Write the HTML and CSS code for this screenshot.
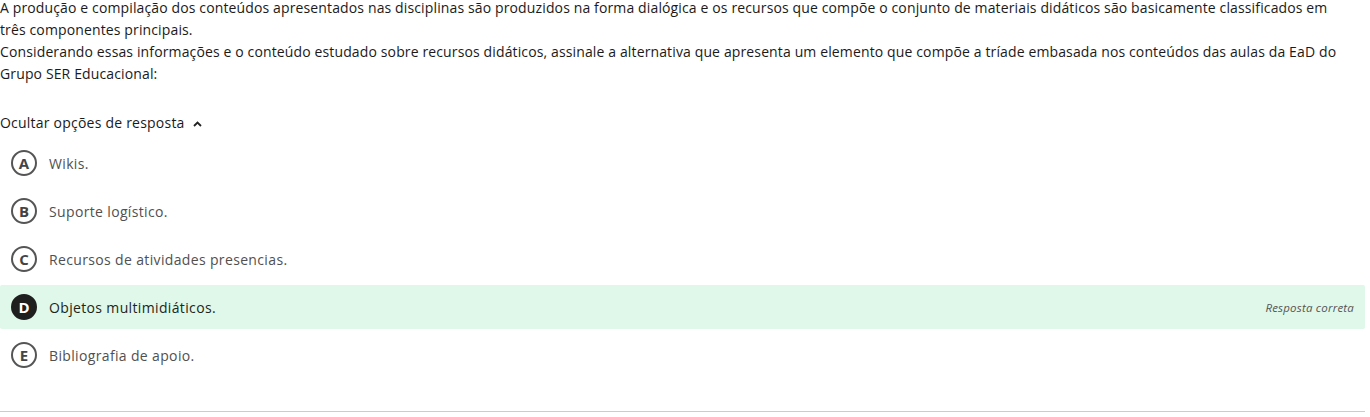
FILE: index.html
```html
<!DOCTYPE html>
<html lang="pt-BR">
<head>
<meta charset="utf-8">
<title>Questão</title>
<link rel="stylesheet" href="styles.css">
</head>
<body>
<div class="question">
  <div class="statement">
    <p>A produção e compilação dos conteúdos apresentados nas disciplinas são produzidos na forma dialógica e os recursos que compõe o conjunto de materiais didáticos são basicamente classificados em três componentes principais.</p>
    <p>Considerando essas informações e o conteúdo estudado sobre recursos didáticos, assinale a alternativa que apresenta um elemento que compõe a tríade embasada nos conteúdos das aulas da EaD do Grupo SER Educacional:</p>
  </div>
  <div class="toggle">Ocultar opções de resposta
    <svg class="chev" width="9" height="6" viewBox="0 0 9 6"><path d="M1 5 L4.5 1.5 L8 5" fill="none" stroke="#222" stroke-width="1.8"/></svg>
  </div>
  <ul class="options">
    <li class="option"><span class="letter">A</span><span class="text">Wikis.</span></li>
    <li class="option"><span class="letter">B</span><span class="text">Suporte logístico.</span></li>
    <li class="option"><span class="letter">C</span><span class="text">Recursos de atividades presencias.</span></li>
    <li class="option correct"><span class="letter">D</span><span class="text">Objetos multimidiáticos.</span><span class="tag">Resposta correta</span></li>
    <li class="option"><span class="letter">E</span><span class="text">Bibliografia de apoio.</span></li>
  </ul>
  <div class="divider"></div>
</div>
</body>
</html>
```
FILE: styles.css
```css
html, body {
  margin: 0;
  padding: 0;
  background: #fff;
}
body {
  font-family: "Open Sans", "Liberation Sans", sans-serif;
  font-size: 14px;
  color: #1a1a1a;
}
.question {
  width: 1365px;
  margin-top: -3px;
}
.statement {
  width: 1350px;
}
.statement p {
  margin: 0;
  line-height: 22px;
  letter-spacing: 0.13px;
}
.toggle {
  margin-top: 27px;
  line-height: 22px;
  display: flex;
  align-items: center;
  gap: 8px;
  letter-spacing: 0.22px;
}
.chev {
  margin-top: 1px;
}
.options {
  list-style: none;
  margin: 7px 0 0;
  padding: 0;
  display: flex;
  flex-direction: column;
  gap: 4px;
}
.option {
  height: 44px;
  display: flex;
  align-items: center;
  padding: 0 11px;
  color: #505050;
  letter-spacing: 0.35px;
}
.letter {
  width: 26px;
  height: 26px;
  box-sizing: border-box;
  border: 2px solid #555;
  border-radius: 50%;
  display: flex;
  align-items: center;
  justify-content: center;
  font-weight: 700;
  font-size: 15px;
  letter-spacing: 0;
  color: #444;
  margin-right: 12px;
}
.text {
  flex: 1;
}
.correct {
  background: #e0f8ea;
  border-radius: 2px;
  color: #1b2620;
}
.correct .letter {
  background: #1f1f1f;
  border-color: #1f1f1f;
  color: #fff;
}
.tag {
  font-style: italic;
  font-size: 11.5px;
  letter-spacing: 0.2px;
  color: #555;
}
.divider {
  margin-top: 34px;
  border-top: 1px solid #ccc;
}
```
